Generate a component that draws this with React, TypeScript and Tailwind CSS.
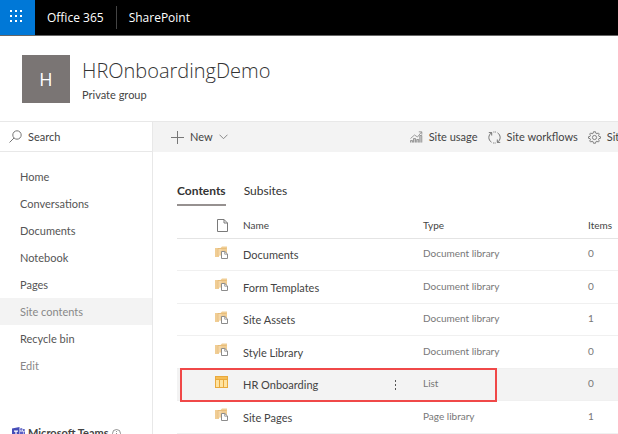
import type { ReactNode } from "react";

type Row = { name: string; type: string; items: number; kind: "library" | "list" };

const rows: Row[] = [
  { name: "Documents", type: "Document library", items: 0, kind: "library" },
  { name: "Form Templates", type: "Document library", items: 0, kind: "library" },
  { name: "Site Assets", type: "Document library", items: 1, kind: "library" },
  { name: "Style Library", type: "Document library", items: 0, kind: "library" },
  { name: "HR Onboarding", type: "List", items: 0, kind: "list" },
  { name: "Site Pages", type: "Page library", items: 1, kind: "library" },
];

const navItems = ["Home", "Conversations", "Documents", "Notebook", "Pages", "Site contents", "Recycle bin"];

function WaffleIcon() {
  return (
    <svg width="12" height="12" viewBox="0 0 12 12" fill="#fff" aria-hidden="true">
      {[0, 5, 10].map((y) => [0, 5, 10].map((x) => <rect key={`${x}-${y}`} x={x} y={y} width="2" height="2" />))}
    </svg>
  );
}

function SearchIcon() {
  return (
    <svg width="13" height="13" viewBox="0 0 13 13" fill="none" stroke="#777" aria-hidden="true">
      <circle cx="8" cy="5" r="4.2" />
      <path d="M5 8 .5 12.5" />
    </svg>
  );
}

function PlusIcon() {
  return (
    <svg width="13" height="13" viewBox="0 0 13 13" stroke="#777" aria-hidden="true">
      <path d="M6.5 0v13M0 6.5h13" />
    </svg>
  );
}

function ChevronIcon() {
  return (
    <svg width="9" height="6" viewBox="0 0 9 6" fill="none" stroke="#888" aria-hidden="true">
      <path d="m.5.7 4 4 4-4" />
    </svg>
  );
}

function UsageIcon() {
  return (
    <svg width="13" height="12" viewBox="0 0 13 12" fill="none" stroke="#888" strokeWidth=".8" aria-hidden="true">
      <path d="M.5 11.5v-2h2v2M3.5 11.5v-4h2v4M6.7 11.5v-3h2v3M9.8 11.5V4.5h2v7" fill="#ccc" />
      <path d="M.5 7.5 4.5 4l3 2 4-5M8.8.8h3v2.8" />
    </svg>
  );
}

function WorkflowIcon() {
  return (
    <svg width="13" height="13" viewBox="0 0 13 13" fill="none" stroke="#666" strokeWidth=".9" aria-hidden="true">
      <path d="M3.5 1.8A5.5 5.5 0 0 0 3.5 11.2M.8 1.6h2.9v2.9" />
      <path d="M9.5 11.2a5.5 5.5 0 0 0 0-9.400M12.200 11.400H9.300V8.500" />
      <path d="M5.200 12h2.400M5.400 1h2.400" strokeDasharray="1 .6" />
    </svg>
  );
}

function GearIcon() {
  return (
    <svg width="13" height="13" viewBox="0 0 24 25" fill="none" stroke="#6b6b6b" strokeWidth="1.6" aria-hidden="true">
      <path d="m10 1.500h4l.7 3 1.900.8 2.600-1.600 2.100 2.100-1.600 2.600.8 1.900 3 .7v3l-3 .7-.8 1.900 1.600 2.600-2.100 2.100-2.600-1.600-1.900.8-.7 3h-4l-.7-3-1.900-.8-2.600 1.600-2.100-2.100 1.600-2.600-.8-1.900-3-.7v-3l3-.7.8-1.900-1.600-2.600 2.100-2.100 2.600 1.600 1.900-.8z" />
      <circle cx="12" cy="12.5" r="4" />
    </svg>
  );
}

function PageIcon() {
  return (
    <svg className="block" width="11" height="13" viewBox="0 0 11 13" fill="#fff" stroke="#7a7a7a" aria-hidden="true">
      <path d="M.5.5h6.500l3.500 3.500v8.500H.5z" />
      <path d="M7 .5V4h3.500" fill="none" />
    </svg>
  );
}

function LibraryIcon() {
  return (
    <svg className="block" width="13" height="13" viewBox="0 0 13 13" aria-hidden="true">
      <path d="M0 2h5.500L7 .5h5v9H4V11H0z" fill="#f0cd94" />
      <path d="M2.500 4h4M2.500 6h3M2.500 8h3" stroke="#fae3bd" />
      <path d="M3 9.500V2.500h8.500" fill="none" stroke="#e3b369" strokeWidth=".6" />
      <path d="M6.500 5.500h3.300l2.700 2.500v4.500h-6z" fill="#fff" stroke="#8c8c8c" />
      <path d="M9.700 5.500V8.200h2.800" fill="none" stroke="#8c8c8c" strokeWidth=".8" />
    </svg>
  );
}

function ListIcon() {
  return (
    <svg className="block" width="13" height="12" viewBox="0 0 13 12" aria-hidden="true">
      <rect x=".5" y=".5" width="12" height="11" fill="#ffe3a0" stroke="#e9a93c" />
      <path d="M1 1h11v2H1z" fill="#f6bd55" />
      <path d="M.5 3.500h12M4.500 3.500v8M8.500 3.500v8" stroke="#e9a93c" />
    </svg>
  );
}

function TeamsIcon() {
  return (
    <svg width="13" height="13" viewBox="0 0 13 13" aria-hidden="true">
      <path d="M0 1.500 7.500 0v13L0 11.500z" fill="#464eb8" />
      <path d="M2 4.200h4M4 4.200v5" stroke="#fff" strokeWidth="1.200" />
      <circle cx="9.300" cy="2.400" r="1.300" fill="#7378ce" />
      <circle cx="11.900" cy="2.900" r="1" fill="#464eb8" />
      <path d="M8 4.500h3v6H8zM11.500 4.500H13v4h-1.500z" fill="#5b60c6" />
    </svg>
  );
}

function InfoIcon() {
  return (
    <svg width="9" height="9" viewBox="0 0 9 9" fill="none" stroke="#777" strokeWidth=".8" aria-hidden="true">
      <circle cx="4.500" cy="4.500" r="4" />
      <path d="M4.500 2v1M4.500 4v3" />
    </svg>
  );
}

function Command({ icon, children }: { icon: ReactNode; children: ReactNode }) {
  return (
    <button type="button" className="flex shrink-0 items-center gap-1.5 whitespace-nowrap">
      {icon}
      {children}
    </button>
  );
}

export default function App() {
  return (
    <div className="flex h-screen flex-col overflow-hidden bg-white font-['Lato','Noto_Sans',sans-serif] text-[11px] leading-4 text-[#444]">
      <header className="flex h-9 shrink-0 items-center border-b border-[#666] bg-black font-['Open_Sans',sans-serif] text-[12px] text-white">
        <button type="button" aria-label="App launcher" className="flex w-[35px] items-center justify-center self-stretch bg-[#0078d7] pr-1 pb-1">
          <WaffleIcon />
        </button>
        <a href="#office" className="px-3">Office 365</a>
        <span className="h-[23px] w-px bg-[#444]" />
        <a href="#sharepoint" className="px-3">SharePoint</a>
      </header>

      <div className="flex h-[85px] shrink-0 items-center gap-3 pl-[22px]">
        <div className="flex size-12 items-center justify-center bg-[#7a7574] font-['Open_Sans',sans-serif] text-[18px] text-white">H</div>
        <div className="pt-1">
          <h1 className="font-['Open_Sans',sans-serif] text-[20px] leading-7 font-light text-[#333]">HROnboardingDemo</h1>
          <p className="leading-5">Private group</p>
        </div>
      </div>

      <div className="flex min-h-0 flex-1 border-t border-[#e8e8e8]">
        <aside className="flex w-[153px] shrink-0 flex-col border-r border-[#e8e8e8]">
          <label className="flex h-[30px] shrink-0 items-center gap-1.5 border-b border-[#e8e8e8] pl-[9px]">
            <SearchIcon />
            <input type="search" aria-label="Search" placeholder="Search" className="w-24 outline-none placeholder:text-[#444] placeholder:opacity-100" />
          </label>
          <nav className="flex flex-col pt-[11px]">
            {navItems.map((item) => (
              <a
                key={item}
                href="#nav"
                className={`flex h-[27px] items-center pl-5 ${item === "Site contents" ? "bg-[#f3f3f3] text-[#888]" : "text-[#555]"}`}
              >
                {item}
              </a>
            ))}
            <button type="button" className="flex h-[27px] items-center pl-5 text-[#888]">Edit</button>
          </nav>
          <a href="#teams" className="mt-[46px] flex shrink-0 items-center gap-[3px] pl-3 font-bold whitespace-nowrap text-[#444]">
            <TeamsIcon />
            Microsoft Teams
            <InfoIcon />
          </a>
        </aside>

        <main className="min-w-0 flex-1 overflow-hidden">
          <div className="flex h-[30px] items-center bg-[#f3f3f3] pl-[18px]">
            <button type="button" className="mr-[182px] flex shrink-0 items-center gap-1.5">
              <PlusIcon />
              New
              <ChevronIcon />
            </button>
            <div className="flex gap-2.5">
              <Command icon={<UsageIcon />}>Site usage</Command>
              <Command icon={<WorkflowIcon />}>Site workflows</Command>
              <Command icon={<GearIcon />}>Site settings</Command>
            </div>
          </div>

          <div className="pl-6">
            <div role="tablist" className="flex gap-[18px] pt-[30px] text-[12px] text-[#333]">
              <button type="button" role="tab" aria-selected="true" className="h-6 border-b-2 border-[#969190] pb-1 font-bold">Contents</button>
              <button type="button" role="tab" aria-selected="false" className="h-6 pb-1.5">Subsites</button>
            </div>

            <div className="relative mt-[7px]">
              <table className="w-full table-fixed border-collapse text-left">
                <colgroup>
                  <col className="w-[66px]" />
                  <col className="w-[145px]" />
                  <col className="w-[35px]" />
                  <col className="w-[165px]" />
                  <col />
                </colgroup>
                <thead>
                  <tr className="h-[25px] border-b border-[#e4e4e4] text-[10px]">
                    <th className="pl-10" aria-label="File type"><PageIcon /></th>
                    <th className="font-normal">Name</th>
                    <th aria-label="Actions" />
                    <th className="font-normal">Type</th>
                    <th className="font-normal">Items</th>
                  </tr>
                </thead>
                <tbody>
                  {rows.map((row) => (
                    <tr key={row.name} className={`border-b border-[#f0f0f0] odd:h-8 even:h-[33px] ${row.kind === "list" ? "bg-[#f3f3f3]" : ""}`}>
                      <td className="pb-1 pl-[38px]">{row.kind === "list" ? <ListIcon /> : <LibraryIcon />}</td>
                      <td className="pt-0.5"><a href="#item">{row.name}</a></td>
                      <td className="pt-0.5 pl-1.5">
                        {row.kind === "list" && (
                          <button type="button" aria-label="Show actions" className="flex">
                            <svg width="3" height="10" viewBox="0 0 3 10" fill="#555" aria-hidden="true">
                              <path d="M1 0h1v2H1zM1 4h1v2H1zM1 8h1v2H1z" />
                            </svg>
                          </button>
                        )}
                      </td>
                      <td className="pb-0.5 text-[10px] text-[#777]">{row.type}</td>
                      <td className="pb-0.5 text-[10px] text-[#777]">{row.items}</td>
                    </tr>
                  ))}
                </tbody>
              </table>
              <div className="pointer-events-none absolute top-[155px] left-[3px] h-[34px] w-[317px] border-2 border-[#f04848]" />
            </div>
          </div>
        </main>
      </div>
    </div>
  );
}
